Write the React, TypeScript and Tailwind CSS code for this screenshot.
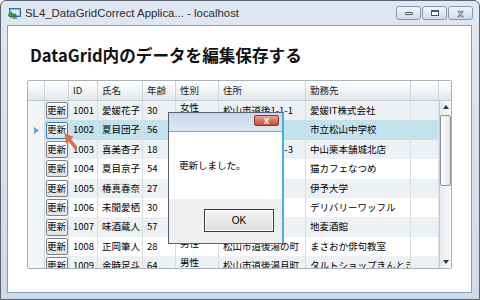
const rows = [
  { id: 1001, name: "愛媛花子", age: 30, sex: "女性", addr: "松山市道後1-1-1", work: "愛媛IT株式会社" },
  { id: 1002, name: "夏目団子", age: 56, sex: "男性", addr: "松山市道後2-2", work: "市立松山中学校" },
  { id: 1003, name: "喜美杏子", age: 18, sex: "女性", addr: "松山市道後3-3-3", work: "中山栗本舗城北店" },
  { id: 1004, name: "夏目京子", age: 54, sex: "女性", addr: "松山市道後4-2", work: "猫カフェなつめ" },
  { id: 1005, name: "椿真春奈", age: 27, sex: "女性", addr: "松山市道後5-5", work: "伊予大学" },
  { id: 1006, name: "未聞愛栖", age: 30, sex: "女性", addr: "松山市道後6-6", work: "デリバリーワッフル" },
  { id: 1007, name: "味酒蔵人", age: 57, sex: "男性", addr: "松山市道後7-7", work: "地麦酒館" },
  { id: 1008, name: "正岡筆人", age: 28, sex: "男性", addr: "松山市道後湯の町", work: "まさおか俳句教室" },
  { id: 1009, name: "金時足斗", age: 64, sex: "男性", addr: "松山市道後湯月町", work: "タルトショップきんとき" },
];

const cols = ["w-[29px]", "w-[45px]", "w-[33px]", "w-[43px]", "w-[87px]", "w-[105px]", "w-[28px]"];

export default function App() {
  return (
    <div className="relative flex h-[300px] w-[480px] flex-col overflow-hidden rounded-t-[6px] border border-[#5b6571] bg-gradient-to-b from-[#dfe8f2] to-[#cfdbe8] font-['Noto_Sans_CJK_JP',sans-serif] text-black">
      <TitleBar />
      <div className="ml-[6px] flex h-[268px] w-[465px] flex-col border border-[#8d9cad] bg-white">
        <h1 className="mt-[17px] pl-[22px] text-[16.6px] font-bold leading-[24px] text-[#111]">
          DataGrid内のデータを編集保存する
        </h1>
        <div className="ml-[19px] mt-[13px]">
          <DataGrid />
        </div>
      </div>
      <Dialog />
      <Cursor />
    </div>
  );
}

function TitleBar() {
  return (
    <div className="flex h-[24px] shrink-0 items-center pl-[7px] pr-[6px]">
      <svg width="13" height="12" viewBox="0 0 13 12" className="mr-[4px] mt-[2px]">
        <rect x="1.5" y="0.5" width="11" height="8" fill="#8fb8dd" stroke="#3e6e9c" />
        <rect x="3" y="2" width="8" height="5" fill="#d7ebfa" />
        <rect x="5" y="9" width="4" height="2" fill="#7a8b9c" />
        <path d="M0 7 L4 4 L4 6 L8 6 L8 8 L4 8 L4 10 Z" fill="#3aa53a" stroke="#1f6d1f" strokeWidth="0.6" />
      </svg>
      <span className="mt-[2px] font-['Liberation_Sans',sans-serif] text-[11.4px] text-[#2b2b2b]">
        SL4_DataGridCorrect Applica... - localhost
      </span>
      <div className="flex-1" />
      <div className="flex gap-[1px]">
        <TitleButton>
          <div className="h-[3px] w-[8px] rounded-[1px] border border-[#4a5563] bg-white" />
        </TitleButton>
        <TitleButton>
          <div className="h-[6px] w-[8px] border border-t-2 border-[#4a5563] bg-white" />
        </TitleButton>
        <TitleButton>
          <span className="text-[10px] leading-none font-bold text-white [-webkit-text-stroke:0.6px_#4a5563]">x</span>
        </TitleButton>
      </div>
    </div>
  );
}

function TitleButton({ children }: { children: React.ReactNode }) {
  return (
    <div className="flex h-[14px] w-[25px] items-center justify-center rounded-[3px] border border-[#8797ab] bg-gradient-to-b from-[#f1f5f9] to-[#d1dce8]">
      {children}
    </div>
  );
}

function DataGrid() {
  return (
    <div className="flex h-[189px] w-[425px] flex-col overflow-hidden rounded-[2px] border border-[#a9b1ba] text-[9.5px] leading-none">
      <div className="flex h-[20px] shrink-0 border-b border-[#c2c8cf] bg-gradient-to-b from-white to-[#e3e7eb]">
        <div className="w-[17px] border-r border-[#cdd2d8]" />
        <div className="w-[24px] border-r border-[#cdd2d8]" />
        {["ID", "氏名", "年齢", "性別", "住所", "勤務先", ""].map((h, i) => (
          <div key={i} className={`${cols[i]} flex items-center border-r border-[#cdd2d8] px-[4px] text-[#222]`}>
            {h}
          </div>
        ))}
        <div className="flex-1" />
      </div>
      <div className="flex min-h-0 flex-1">
        <div className="min-w-0 flex-1 overflow-hidden">
          {rows.map((r, i) => (
            <Row key={r.id} r={r} odd={i % 2 === 0} selected={i === 1} />
          ))}
        </div>
        <ScrollBar />
      </div>
    </div>
  );
}

function Row({ r, odd, selected }: { r: (typeof rows)[number]; odd: boolean; selected: boolean }) {
  const bg = selected ? "bg-[#c2e2ec]" : odd ? "bg-[#eef1f4]" : "bg-white";
  const cells = [String(r.id), r.name, String(r.age), r.sex, r.addr, r.work, ""];
  return (
    <div className="flex h-[19.4px] shrink-0">
      <div className="flex w-[17px] items-center justify-center border-r border-[#d3d8de] bg-[#f2f4f6]">
        {selected && (
          <svg width="5" height="7" viewBox="0 0 5 7">
            <path d="M0 0 L5 3.5 L0 7 Z" fill="#5aa8da" />
          </svg>
        )}
      </div>
      <div className={`flex w-[24px] items-center justify-center border-r border-[#d9dde2] ${bg}`}>
        <div
          className={`flex h-[17px] w-[22px] items-center justify-center rounded-[2px] border bg-gradient-to-b from-white to-[#dde2e7] ${
            selected ? "border-[#3c7fb1]" : "border-[#7b838c]"
          }`}
        >
          更新
        </div>
      </div>
      {cells.map((c, i) => (
        <div
          key={i}
          className={`${cols[i]} flex ${i === 3 ? "items-start pt-[2px]" : "items-center"} overflow-hidden whitespace-nowrap border-r border-[#d9dde2] px-[4px] ${bg}`}
        >
          {c}
        </div>
      ))}
    </div>
  );
}

function ScrollBar() {
  return (
    <div className="flex w-[12px] flex-col items-center border-l border-[#c9ced4] bg-gradient-to-r from-[#e9ecef] to-[#f7f8f9]">
      <svg width="6" height="4" viewBox="0 0 6 4" className="mt-[4px]">
        <path d="M0 4 L3 0 L6 4 Z" fill="#333" />
      </svg>
      <div className="mt-[6px] h-[71px] w-[11px] rounded-[2px] border border-[#8a939c] bg-gradient-to-r from-white to-[#e2e6ea]" />
      <div className="flex-1" />
      <svg width="6" height="4" viewBox="0 0 6 4" className="mb-[4px]">
        <path d="M0 0 L3 4 L6 0 Z" fill="#333" />
      </svg>
    </div>
  );
}

function Dialog() {
  return (
    <div className="absolute left-[167px] top-[111px] flex h-[132px] w-[116px] flex-col border border-[#56626f] border-r-2 border-r-[#3fb2e3] bg-[#dfe8f2]">
      <div className="flex h-[18px] shrink-0 items-start justify-end bg-gradient-to-b from-[#c9d9ea] to-[#dde7f2] pr-[3px] pt-[2px]">
        <div className="flex h-[11px] w-[25px] items-center justify-center rounded-[2px] border border-[#8a3a2b] bg-gradient-to-b from-[#e8a391] to-[#c7492f]">
          <span className="font-['Liberation_Sans',sans-serif] text-[10px] font-bold leading-none text-white">x</span>
        </div>
      </div>
      <div className="flex flex-1 flex-col border-t border-[#8e9db0] bg-white">
        <div className="flex h-[67px] items-center pl-[10px] text-[9.5px]">更新しました。</div>
        <div className="flex flex-1 items-start bg-[#efefef] pl-[35px] pt-[10px]">
          <div className="flex h-[23px] w-[70px] items-center justify-center border border-[#3b3b3b] bg-gradient-to-b from-[#f4f4f4] to-[#dcdcdc] shadow-[inset_0_0_0_1px_#ffffff] font-['Liberation_Sans',sans-serif] text-[10px]">
            OK
          </div>
        </div>
      </div>
    </div>
  );
}

function Cursor() {
  return (
    <svg width="16" height="18" viewBox="0 0 16 18" className="absolute left-[62px] top-[132px]">
      <path d="M2 1 L10 4 L7.5 6 L14 14 L12 16 L5.5 8 L3.5 10 Z" fill="#ec6a43" stroke="#d0502c" strokeWidth="0.6" />
    </svg>
  );
}
